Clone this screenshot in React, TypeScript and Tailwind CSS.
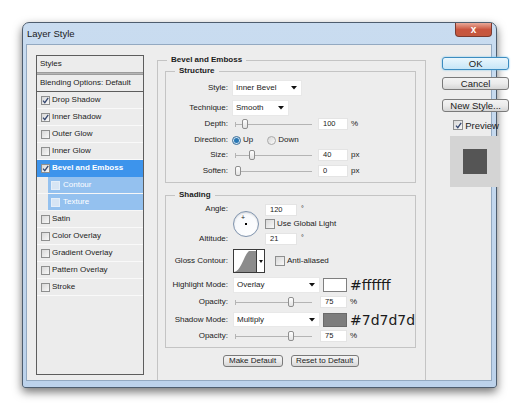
import React from 'react'

const items = [
  { label: 'Drop Shadow', checked: true },
  { label: 'Inner Shadow', checked: true },
  { label: 'Outer Glow' },
  { label: 'Inner Glow' },
  { label: 'Bevel and Emboss', checked: true, selected: true },
  { label: 'Contour', sub: true },
  { label: 'Texture', sub: true },
  { label: 'Satin' },
  { label: 'Color Overlay' },
  { label: 'Gradient Overlay' },
  { label: 'Pattern Overlay' },
  { label: 'Stroke' },
]

function Check({ checked = false, light = false, size = 'h-[9px] w-[9px]' }: { checked?: boolean; light?: boolean; size?: string }) {
  return (
    <span
      className={`flex ${size} shrink-0 items-center justify-center border ${
        light ? 'border-[#e4eef9] bg-[#d7e5f4]' : 'border-[#8e8f8f] bg-linear-to-br from-[#d8d8d8] to-[#f8f8f8]'
      }`}
    >
      {checked && (
        <svg width="7" height="7" viewBox="0 0 7 7">
          <path d="M1 3.6 L2.8 5.6 L6.2 0.9" fill="none" stroke="#34466f" strokeWidth="1.3" />
        </svg>
      )}
    </span>
  )
}

function Arrow() {
  return (
    <svg width="6" height="4" viewBox="0 0 6 4">
      <polygon points="0,0 6,0 3,3.5" fill="#111" />
    </svg>
  )
}

function Select({ value, w, h = 'h-[16px]' }: { value: string; w: string; h?: string }) {
  return (
    <div className={`flex ${h} ${w} items-center justify-between border border-[#e8e8e8] bg-white pl-[3px] pr-[4px]`}>
      <span>{value}</span>
      <Arrow />
    </div>
  )
}

function Field({ value, w = 'w-[30px]' }: { value: string; w?: string }) {
  return (
    <span className={`flex h-[12px] ${w} items-center border border-[#e4e4e4] bg-white pl-[4px] text-[7.5px]`}>
      {value}
    </span>
  )
}

function Slider({ pos }: { pos: number }) {
  return (
    <div className="relative h-[12px] w-[77px]">
      <div className="absolute left-0 right-0 top-[6px] h-px bg-[#b4b4b4]" />
      <div className="absolute left-0 top-[4px] h-[5px] w-px bg-[#b4b4b4]" />
      <div
        className="absolute top-[1px] h-[10px] w-[6px] rounded-[2px] border border-[#8f8f8f] bg-linear-to-b from-white to-[#e2e2e2]"
        style={{ left: `${(pos / 100) * 71}px` }}
      />
    </div>
  )
}

function Label({ children }: { children: React.ReactNode }) {
  return <span className="w-[62px] shrink-0 text-right">{children}</span>
}

function Radio({ on }: { on?: boolean }) {
  return (
    <span
      className={`flex h-[9px] w-[9px] shrink-0 items-center justify-center rounded-full border ${
        on ? 'border-[#3c6f98] bg-[#cfe3f3]' : 'border-[#a9a9a9] bg-linear-to-br from-[#d8d8d8] to-[#fafafa]'
      }`}
    >
      {on && <span className="h-[5px] w-[5px] rounded-full bg-[#2a78b4]" />}
    </span>
  )
}

function Btn({ children, w, primary }: { children: React.ReactNode; w: string; primary?: boolean }) {
  return (
    <div
      className={`flex ${w} items-center justify-center rounded-[3px] border ${
        primary
          ? 'border-[#3c8cc0] bg-linear-to-b from-[#eaf6fd] to-[#c6e6f7] shadow-[0_0_2px_#6fc4ef]'
          : 'border-[#7a7a7a] bg-linear-to-b from-[#f3f3f3] via-[#ebebeb] to-[#d6d6d6]'
      }`}
    >
      {children}
    </div>
  )
}

export default function App() {
  return (
    <div className="h-[408px] w-[520px] overflow-hidden bg-white pl-[22px] pt-[22px] font-['Liberation_Sans',Arial,sans-serif] text-[8px] leading-[10px] text-[#1b1b1b]">
      <div className="flex h-[366px] w-[475px] flex-col rounded-t-[7px] rounded-b-[3px] border border-[#4e5d6e] bg-linear-to-b from-[#c9dcf0] to-[#bcd2eb] shadow-[0_4px_10px_rgba(0,0,0,0.55)]">
        {/* title bar */}
        <div className="flex h-[21px] shrink-0 items-start">
          <span className="pl-[4px] pt-[5px] text-[9.5px] leading-[11px] text-[#1a1a1a]">Layer Style</span>
          <div className="ml-auto mr-[4px] flex h-[14px] w-[37px] items-center justify-center rounded-b-[4px] border border-t-0 border-[#7a3a30] bg-linear-to-b from-[#e8a898] via-[#c9553f] to-[#c4583f] text-[10px] font-bold leading-[10px] text-white">
            x
          </div>
        </div>

        {/* client */}
        <div className="ml-[3px] flex h-[337px] w-[466px] border border-[#93a9c1] bg-[#ededed] pl-[9px] pt-[10px]">
          {/* styles list */}
          <div className="h-[320px] w-[108px] shrink-0 border border-[#5d5d5d] bg-[#ececec]">
            <div className="flex h-[16px] items-center pl-[3px]">Styles</div>
            <div className="h-[3px] border-y border-[#9c9c9c] bg-[#b5b5b5]" />
            <div className="flex h-[17px] items-center border-b border-[#5d5d5d] pl-[3px]">Blending Options: Default</div>
            {items.map((it) =>
              it.sub ? (
                <div key={it.label} className="flex h-[17px] border-b border-[#f7f7f7] pl-[11px]">
                  <div className="flex flex-1 items-center gap-[3px] bg-[#94c1ef] pl-[3px] text-white">
                    <Check light />
                    {it.label}
                  </div>
                </div>
              ) : (
                <div
                  key={it.label}
                  className={`flex h-[17px] items-center gap-[2px] border-b pl-[4px] ${
                    it.selected ? 'border-[#3d94ec] bg-[#3d94ec] font-bold text-white' : 'border-[#f9f9f9]'
                  }`}
                >
                  <Check checked={it.checked} />
                  {it.label}
                </div>
              )
            )}
          </div>

          {/* Bevel and Emboss group, open at the bottom */}
          <fieldset className="ml-[13px] w-[242px] shrink-0 border border-b-0 border-[#c4c4c4] pl-[7px] pr-[9px]">
            <legend className="ml-[2px] px-[4px] font-bold">Bevel and Emboss</legend>

            <fieldset className="mt-[1px] border border-[#c4c4c4] pb-[5px]">
              <legend className="ml-[9px] px-[4px] font-bold">Structure</legend>
              <div className="mt-[4px] flex h-[16px] items-center">
                <Label>Style:</Label>
                <div className="ml-[4px]">
                  <Select value="Inner Bevel" w="w-[70px]" />
                </div>
              </div>
              <div className="mt-[4px] flex h-[16px] items-center">
                <Label>Technique:</Label>
                <div className="ml-[4px]">
                  <Select value="Smooth" w="w-[57px]" />
                </div>
              </div>
              <div className="mt-[2px] flex h-[12px] items-center">
                <Label>Depth:</Label>
                <div className="ml-[7px]">
                  <Slider pos={10} />
                </div>
                <div className="ml-[6px]">
                  <Field value="100" />
                </div>
                <span className="ml-[3px]">%</span>
              </div>
              <div className="mt-[4px] flex h-[12px] items-center">
                <Label>Direction:</Label>
                <span className="ml-[4px]">
                  <Radio on />
                </span>
                <span className="ml-[2px]">Up</span>
                <span className="ml-[14px]">
                  <Radio />
                </span>
                <span className="ml-[2px]">Down</span>
              </div>
              <div className="mt-[3px] flex h-[12px] items-center">
                <Label>Size:</Label>
                <div className="ml-[7px]">
                  <Slider pos={20} />
                </div>
                <div className="ml-[6px]">
                  <Field value="40" />
                </div>
                <span className="ml-[3px]">px</span>
              </div>
              <div className="mt-[4px] flex h-[12px] items-center">
                <Label>Soften:</Label>
                <div className="ml-[7px]">
                  <Slider pos={0} />
                </div>
                <div className="ml-[6px]">
                  <Field value="0" />
                </div>
                <span className="ml-[3px]">px</span>
              </div>
            </fieldset>

            <fieldset className="mt-[7px] border border-[#c4c4c4] pb-[5px]">
              <legend className="ml-[9px] px-[4px] font-bold">Shading</legend>
              <div className="mt-[4px] flex h-[41px]">
                <div className="flex w-[62px] shrink-0 flex-col items-end">
                  <span>Angle:</span>
                  <span className="mb-[1px] mt-auto">Altitude:</span>
                </div>
                <div className="relative ml-[5px] mt-[7px] h-[26px] w-[26px] rounded-full border border-[#7f93ad] bg-linear-to-br from-[#f4f7fb] to-white shadow-[inset_0_1px_2px_rgba(0,0,0,0.15)]">
                  <span className="absolute left-[7px] top-[2px] text-[7px] leading-[7px]">+</span>
                  <span className="absolute left-[11px] top-[11px] h-[2px] w-[2px] bg-black" />
                </div>
                <div className="ml-[6px] flex flex-col">
                  <div className="flex h-[12px] items-center">
                    <Field value="120" w="w-[32px]" />
                    <span className="ml-[4px] self-start text-[7px]">°</span>
                  </div>
                  <div className="mt-[2px] flex h-[12px] items-center gap-[2px]">
                    <Check size="h-[10px] w-[10px]" />
                    <span>Use Global Light</span>
                  </div>
                  <div className="mt-[3px] flex h-[12px] items-center">
                    <Field value="21" w="w-[32px]" />
                    <span className="ml-[4px] self-start text-[7px]">°</span>
                  </div>
                </div>
              </div>
              <div className="mt-[4px] flex h-[24px] items-center">
                <Label>Gloss Contour:</Label>
                <div className="ml-[5px] flex h-[24px] w-[32px] border border-[#3a3a3a] bg-white">
                  <svg width="22" height="22" viewBox="0 0 22 22" className="shrink-0">
                    <path d="M0 22 C 7 21, 9 8, 14 2 L 15 1 L 22 1 L 22 22 Z" fill="#8c8c8c" />
                  </svg>
                  <div className="flex flex-1 items-center justify-center border-l border-[#3a3a3a]">
                    <svg width="4" height="3" viewBox="0 0 4 3">
                      <polygon points="0,0 4,0 2,3" fill="#111" />
                    </svg>
                  </div>
                </div>
                <span className="ml-[10px]">
                  <Check size="h-[10px] w-[10px]" />
                </span>
                <span className="ml-[2px]">Anti-aliased</span>
              </div>
              <div className="mt-[4px] flex h-[16px] items-center">
                <Label>Highlight Mode:</Label>
                <div className="ml-[5px]">
                  <Select value="Overlay" w="w-[87px]" />
                </div>
                <span className="ml-[3px] h-[14px] w-[24px] border border-[#7f7f7f] bg-white" />
                <span className="ml-[3px] font-['DejaVu_Sans',sans-serif] text-[14px] leading-[14px] text-[#1a1a1a]">#ffffff</span>
              </div>
              <div className="mt-[3px] flex h-[12px] items-center">
                <Label>Opacity:</Label>
                <div className="ml-[7px]">
                  <Slider pos={75} />
                </div>
                <div className="ml-[8px]">
                  <Field value="75" w="w-[27px]" />
                </div>
                <span className="ml-[3px]">%</span>
              </div>
              <div className="mt-[4px] flex h-[15px] items-center">
                <Label>Shadow Mode:</Label>
                <div className="ml-[5px]">
                  <Select value="Multiply" w="w-[87px]" h="h-[15px]" />
                </div>
                <span className="ml-[3px] h-[14px] w-[24px] border border-[#6a6a6a] bg-[#7d7d7d]" />
                <span className="ml-[3px] font-['DejaVu_Sans',sans-serif] text-[14px] leading-[14px] text-[#1a1a1a]">#7d7d7d</span>
              </div>
              <div className="mt-[3px] flex h-[12px] items-center">
                <Label>Opacity:</Label>
                <div className="ml-[7px]">
                  <Slider pos={75} />
                </div>
                <div className="ml-[8px]">
                  <Field value="75" w="w-[27px]" />
                </div>
                <span className="ml-[3px]">%</span>
              </div>
            </fieldset>

            <div className="mt-[7px] flex justify-center gap-[8px]">
              <div className="h-[12px]">
                <Btn w="h-[12px] w-[60px]">Make Default</Btn>
              </div>
              <div className="h-[12px]">
                <Btn w="h-[12px] w-[68px]">Reset to Default</Btn>
              </div>
            </div>
          </fieldset>

          {/* right column */}
          <div className="ml-[16px] mt-[2px] flex w-[67px] shrink-0 flex-col text-[9.5px] leading-[11px]">
            <Btn w="h-[13px] w-[67px]" primary>
              OK
            </Btn>
            <div className="mt-[7px]">
              <Btn w="h-[13px] w-[67px]">Cancel</Btn>
            </div>
            <div className="mt-[9px]">
              <Btn w="h-[13px] w-[67px]">New Style...</Btn>
            </div>
            <div className="ml-[11px] mt-[7px] flex h-[12px] items-center gap-[2px]">
              <Check checked size="h-[10px] w-[10px]" />
              <span>Preview</span>
            </div>
            <div className="ml-[8px] mt-[5px] flex h-[51px] w-[50px] items-center justify-center bg-[#d4d4d4]">
              <span className="h-[25px] w-[24px] bg-[#555555]" />
            </div>
          </div>
        </div>
      </div>
    </div>
  )
}
